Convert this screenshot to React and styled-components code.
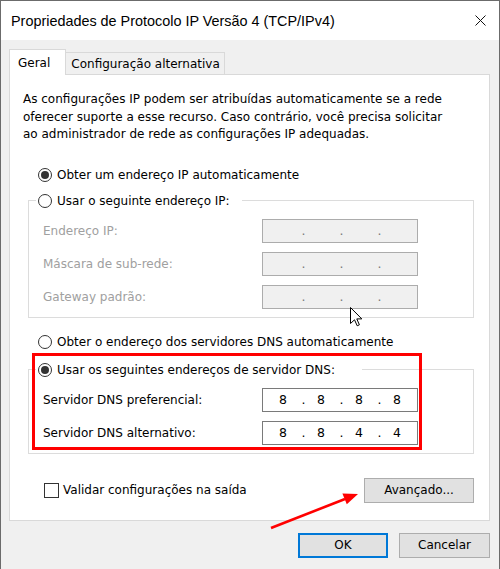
import { Fragment } from "react";
import styled, { createGlobalStyle } from "styled-components";

const GlobalStyle = createGlobalStyle`
  html, body {
    margin: 0;
    padding: 0;
    background: #ffffff;
  }
  * {
    box-sizing: border-box;
  }
`;

const Janela = styled.div`
  position: relative;
  width: 500px;
  height: 569px;
  display: flex;
  flex-direction: column;
  border: 1px solid #6b6b6b;
  border-bottom: none;
  background: #f0f0f0;
  font-family: "DejaVu Sans", Tahoma, sans-serif;
  font-size: 12px;
  color: #000;
  overflow: hidden;
`;

const BarraTitulo = styled.div`
  flex-shrink: 0;
  height: 39px;
  display: flex;
  align-items: center;
  justify-content: space-between;
  padding: 0 13px 0 10px;
  background: #ffffff;
`;

const Titulo = styled.span`
  font-family: "Liberation Sans", Arial, sans-serif;
  font-size: 14.4px;
  color: #000;
`;

const Corpo = styled.div`
  flex: 1;
  display: flex;
  flex-direction: column;
  padding: 9px 9px 0 8px;
`;

const Abas = styled.div`
  display: flex;
  align-items: flex-end;
  height: 25px;
  position: relative;
  z-index: 1;
`;

const Aba = styled.div`
  display: flex;
  align-items: center;
  height: ${(p) => (p.$ativa ? "26px" : "22px")};
  margin-bottom: ${(p) => (p.$ativa ? "-1px" : "0")};
  padding: ${(p) => (p.$ativa ? "0 15px 0 8px" : "0 4px 0 5px")};
  background: ${(p) => (p.$ativa ? "#ffffff" : "#f0f0f0")};
  border: 1px solid #d9d9d9;
  border-bottom: none;
  border-left: ${(p) => (p.$ativa ? "1px solid #d9d9d9" : "none")};
  white-space: nowrap;
`;

const Painel = styled.div`
  position: relative;
  display: flex;
  flex-direction: column;
  background: #ffffff;
  border: 1px solid #d9d9d9;
  padding-bottom: 17px;
`;

const Paragrafo = styled.p`
  margin: 16px 0 0 13px;
  line-height: 17.5px;
  white-space: nowrap;
`;

const LinhaRadio = styled.label`
  display: flex;
  align-items: center;
  gap: 5px;
  height: 18px;
  margin-top: ${(p) => p.$topo || 0}px;
  padding-left: ${(p) => (p.$solto ? "28px" : "0")};
  white-space: nowrap;
`;

const Radio = styled.span`
  position: relative;
  width: 14px;
  height: 14px;
  border: 1px solid #333333;
  border-radius: 50%;
  background: #ffffff;
  flex-shrink: 0;

  &::after {
    content: "";
    display: ${(p) => (p.$marcado ? "block" : "none")};
    position: absolute;
    left: 2px;
    top: 2px;
    width: 8px;
    height: 8px;
    border-radius: 50%;
    background: #333333;
  }
`;

const Grupo = styled.fieldset`
  margin: ${(p) => p.$topo}px 15px 0 18px;
  padding: 9px 55px 8px 7px;
  border: 1px solid #dcdcdc;
  min-width: 0;
`;

const Legenda = styled.legend`
  padding: 0 ${(p) => p.$folga}px 0 2px;
  line-height: 18px;
`;

const Campos = styled.div`
  display: grid;
  grid-template-columns: 1fr 156px;
  row-gap: 9px;
  align-items: center;
  padding-left: 7px;
`;

const Rotulo = styled.span`
  color: ${(p) => (p.$desativado ? "#a0a0a0" : "#000")};
  white-space: nowrap;
`;

const CampoIP = styled.div`
  display: grid;
  grid-template-columns: 30px 8px 30px 8px 30px 8px 30px;
  align-items: center;
  height: 24px;
  padding-left: 5px;
  border: 1px solid ${(p) => (p.$desativado ? "#acacac" : "#7a7a7a")};
  background: ${(p) => (p.$desativado ? "#f0f0f0" : "#ffffff")};
  font-size: 12.5px;
`;

const Octeto = styled.span`
  text-align: center;
`;

const Ponto = styled.span`
  text-align: center;
  padding-left: 3px;
  color: ${(p) => (p.$desativado ? "#7a7a7a" : "#000")};
`;

const Rodape = styled.div`
  display: flex;
  align-items: center;
  justify-content: space-between;
  margin-top: 24px;
  padding: 0 15px 0 34px;
`;

const LinhaCheck = styled.label`
  display: flex;
  align-items: center;
  gap: 4px;
`;

const Caixa = styled.span`
  width: 15px;
  height: 15px;
  border: 1px solid #333333;
  background: #ffffff;
`;

const Botao = styled.button`
  height: 25px;
  width: ${(p) => p.$largura}px;
  padding: 0;
  font-family: inherit;
  font-size: 12px;
  color: #000;
  background: #e1e1e1;
  border: 1px solid ${(p) => (p.$padrao ? "#0078d7" : "#adadad")};
  box-shadow: ${(p) => (p.$padrao ? "inset 0 0 0 1px #0078d7" : "none")};
`;

const Botoes = styled.div`
  display: flex;
  justify-content: flex-end;
  gap: 11px;
  margin-top: 12px;
`;

const Destaque = styled.div`
  position: absolute;
  left: 22px;
  top: 278px;
  width: 390px;
  height: 97px;
  border: 3px solid #ff0000;
  pointer-events: none;
`;

const Sobreposto = styled.svg`
  position: absolute;
  left: ${(p) => p.$x}px;
  top: ${(p) => p.$y}px;
  pointer-events: none;
`;

function Endereco({ valores, desativado }) {
  const partes = valores || ["", "", "", ""];
  return (
    <CampoIP $desativado={desativado}>
      {partes.map((v, i) => (
        <Fragment key={i}>
          <Octeto>{v}</Octeto>
          {i < 3 && <Ponto $desativado={desativado}>.</Ponto>}
        </Fragment>
      ))}
    </CampoIP>
  );
}

export default function App() {
  return (
    <>
      <GlobalStyle />
      <Janela>
        <BarraTitulo>
          <Titulo>Propriedades de Protocolo IP Versão 4 (TCP/IPv4)</Titulo>
          <svg width="11" height="11" viewBox="0 0 11 11">
            <path d="M0.5 0.5 L10.5 10.5 M10.5 0.5 L0.5 10.5" stroke="#111" strokeWidth="1" />
          </svg>
        </BarraTitulo>

        <Corpo>
          <Abas>
            <Aba $ativa>Geral</Aba>
            <Aba>Configuração alternativa</Aba>
          </Abas>

          <Painel>
            <Paragrafo>
              As configurações IP podem ser atribuídas automaticamente se a rede
              <br />
              oferecer suporte a esse recurso. Caso contrário, você precisa solicitar
              <br />
              ao administrador de rede as configurações IP adequadas.
            </Paragrafo>

            <LinhaRadio $solto $topo={22}>
              <Radio $marcado />
              Obter um endereço IP automaticamente
            </LinhaRadio>

            <Grupo $topo={8}>
              <Legenda $folga={12}>
                <LinhaRadio>
                  <Radio />
                  Usar o seguinte endereço IP:
                </LinhaRadio>
              </Legenda>
              <Campos>
                <Rotulo $desativado>Endereço IP:</Rotulo>
                <Endereco desativado />
                <Rotulo $desativado>Máscara de sub-rede:</Rotulo>
                <Endereco desativado />
                <Rotulo $desativado>Gateway padrão:</Rotulo>
                <Endereco desativado />
              </Campos>
            </Grupo>

            <LinhaRadio $solto $topo={15}>
              <Radio />
              Obter o endereço dos servidores DNS automaticamente
            </LinhaRadio>

            <Grupo $topo={10}>
              <Legenda $folga={27}>
                <LinhaRadio>
                  <Radio $marcado />
                  Usar os seguintes endereços de servidor DNS:
                </LinhaRadio>
              </Legenda>
              <Campos>
                <Rotulo>Servidor DNS preferencial:</Rotulo>
                <Endereco valores={["8", "8", "8", "8"]} />
                <Rotulo>Servidor DNS alternativo:</Rotulo>
                <Endereco valores={["8", "8", "4", "4"]} />
              </Campos>
            </Grupo>

            <Rodape>
              <LinhaCheck>
                <Caixa />
                Validar configurações na saída
              </LinhaCheck>
              <Botao $largura={110}>Avançado...</Botao>
            </Rodape>

            <Destaque />
          </Painel>

          <Botoes>
            <Botao $largura={90} $padrao>
              OK
            </Botao>
            <Botao $largura={91}>Cancelar</Botao>
          </Botoes>
        </Corpo>

        {/* cursor do mouse */}
        <Sobreposto $x={349} $y={306} width="13" height="20" viewBox="0 0 13 20">
          <path
            d="M0.5 0.5 L0.5 16.5 L4.5 12.8 L7.2 18.8 L9.4 17.8 L6.8 11.9 L11.8 11.9 Z"
            fill="#ffffff"
            stroke="#000000"
            strokeWidth="1"
            strokeLinejoin="miter"
          />
        </Sobreposto>

        {/* seta vermelha */}
        <Sobreposto $x={265} $y={487} width="96" height="46" viewBox="0 0 96 46">
          <line x1="5" y1="40" x2="79" y2="11" stroke="#ff0000" strokeWidth="2.6" />
          <polygon points="92,6 80.8,16.3 76.4,5.6" fill="#ff0000" />
        </Sobreposto>
      </Janela>
    </>
  );
}
